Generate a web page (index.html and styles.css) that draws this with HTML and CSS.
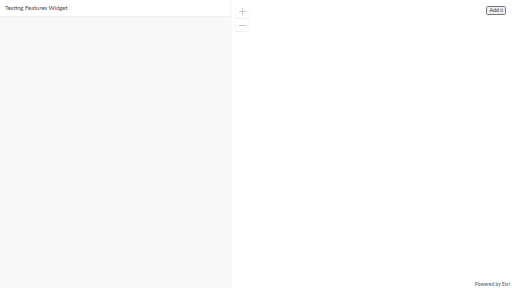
FILE: index.html
```html
<!DOCTYPE html>
<html>
<head>
<meta charset="utf-8">
<link rel="stylesheet" href="styles.css">
</head>
<body>
<div class="app">
  <aside class="panel">
    <header class="panel-header">Testing Features Widget</header>
    <div class="panel-body"></div>
  </aside>
  <main class="map">
    <div class="zoom">
      <button class="zbtn" aria-label="Zoom in">
        <svg width="7" height="7" viewBox="0 0 7 7"><path d="M3.5 0v7M0 3.5h7" stroke="#c9c9c9" stroke-width="1" fill="none"/></svg>
      </button>
      <button class="zbtn" aria-label="Zoom out">
        <svg width="7" height="7" viewBox="0 0 7 7"><path d="M0 3.5h7" stroke="#c9c9c9" stroke-width="1" fill="none"/></svg>
      </button>
    </div>
    <button class="add">Add it</button>
    <div class="attribution">Powered by Esri</div>
  </main>
</div>
</body>
</html>
```
FILE: styles.css
```css
html, body {
  margin: 0;
  padding: 0;
  width: 512px;
  height: 288px;
  overflow: hidden;
  background: #fff;
  font-family: "Avenir Next", "Lato", "Liberation Sans", sans-serif;
}
.app {
  display: flex;
  width: 512px;
  height: 288px;
}
.panel {
  width: 230px;
  display: flex;
  flex-direction: column;
  box-shadow: 1px 0 2px rgba(0,0,0,0.06);
  z-index: 1;
}
.panel-header {
  height: 17px;
  padding: 4px 0 0 5px;
  box-sizing: border-box;
  font-size: 5.9px;
  color: #4a4a4a;
  background: #fff;
  border-bottom: 1px solid #f0f0f0;
  line-height: 7px;
}
.panel-body {
  flex: 1;
  background: #f8f8f8;
}
.map {
  flex: 1;
  position: relative;
  background: #fff;
}
.zoom {
  position: absolute;
  left: 6px;
  top: 5px;
  display: flex;
  flex-direction: column;
  box-shadow: 0 0.5px 1.5px rgba(0,0,0,0.15);
}
.zbtn {
  width: 13px;
  height: 13px;
  padding: 0;
  margin: 0;
  border: none;
  background: #fff;
  display: flex;
  align-items: center;
  justify-content: center;
}
.zbtn + .zbtn {
  border-top: 1px solid #eee;
}
.add {
  position: absolute;
  right: 6px;
  top: 6px;
  height: 9px;
  padding: 0 2px;
  font-family: "Liberation Sans", sans-serif;
  font-size: 5.3px;
  line-height: 7px;
  color: #333;
  background: #efefef;
  border: 1px solid #767676;
  border-radius: 1.5px;
}
.attribution {
  position: absolute;
  right: 2px;
  bottom: 1px;
  font-size: 5px;
  color: #555;
  line-height: 6px;
}
```
